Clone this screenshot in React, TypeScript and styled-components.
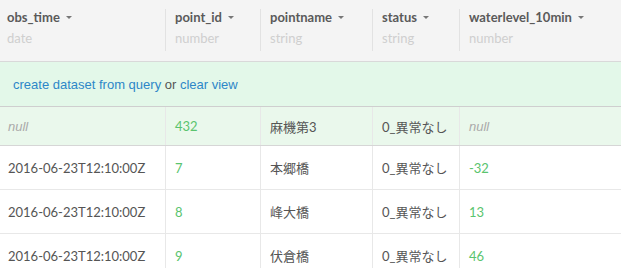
import React from "react";
import styled, { createGlobalStyle } from "styled-components";

const Global = createGlobalStyle`
  html, body { margin: 0; padding: 0; background: #fff; }
  body { font-family: Lato, "Noto Sans CJK JP", sans-serif; overflow: hidden; }
`;

const cols = [165, 95, 112, 87, 162];

const Wrap = styled.div`
  width: 621px;
  height: 268px;
  overflow: hidden;
`;

const Grid = styled.div`
  display: grid;
  grid-template-columns: ${cols.map((c) => c + "px").join(" ")};
`;

const Header = styled(Grid)`
  background: #f4f4f4;
  height: 62px;
  box-sizing: border-box;
  border-bottom: 1px solid #d9d9d9;
  padding-top: 9px;
`;

const HeadCell = styled.div<{ $first?: boolean }>`
  height: 42px;
  box-sizing: border-box;
  padding-left: ${(p) => (p.$first ? "7px" : "9px")};
  border-left: ${(p) => (p.$first ? "none" : "1px solid #e2e2e2")};
  display: flex;
  flex-direction: column;
`;

const Title = styled.div`
  font-weight: 700;
  font-size: 13px;
  color: #5a5a5a;
  line-height: 16px;
  white-space: nowrap;
`;

const Caret = styled.span`
  display: inline-block;
  margin-left: 6px;
  width: 0;
  height: 0;
  border-left: 3px solid transparent;
  border-right: 3px solid transparent;
  border-top: 3px solid #777;
  vertical-align: middle;
  position: relative;
  top: -1px;
`;

const TypeLabel = styled.div`
  font-size: 13px;
  color: #cfcfcf;
  line-height: 16px;
  margin-top: 5px;
`;

const Banner = styled.div`
  background: #e3f8e9;
  height: 45px;
  box-sizing: border-box;
  border-bottom: 1px solid #cfcfcf;
  display: flex;
  align-items: center;
  padding-left: 13px;
  font-family: "Liberation Sans", Arial, sans-serif;
  font-size: 13px;
  color: #555;
`;

const Link = styled.span`
  color: #2d87c8;
`;

const Row = styled(Grid)<{ $hl?: boolean; $h: number }>`
  height: ${(p) => p.$h}px;
  box-sizing: border-box;
  background: ${(p) => (p.$hl ? "#eaf8ec" : "#fff")};
  border-bottom: 1px solid ${(p) => (p.$hl ? "#d6d6d6" : "#e8e8e8")};
`;

const Cell = styled.div<{ $first?: boolean; $kind?: "num" | "null" | "text" }>`
  box-sizing: border-box;
  padding-left: ${(p) => (p.$first ? "8px" : "9px")};
  border-left: ${(p) => (p.$first ? "none" : "1px solid #e8e8e8")};
  display: flex;
  align-items: center;
  font-size: 13px;
  white-space: nowrap;
  overflow: hidden;
  color: ${(p) =>
    p.$kind === "num" ? "#5ac46e" : p.$kind === "null" ? "#aaa" : "#555"};
  font-style: ${(p) => (p.$kind === "null" ? "italic" : "normal")};
  font-family: ${(p) =>
    p.$kind === "null"
      ? `"Liberation Sans", Arial, sans-serif`
      : `Lato, "Noto Sans CJK JP", sans-serif`};
`;

const headers = [
  ["obs_time", "date"],
  ["point_id", "number"],
  ["pointname", "string"],
  ["status", "string"],
  ["waterlevel_10min", "number"],
];

type C = { v: string; k: "num" | "null" | "text" };
const rows: { hl?: boolean; h: number; cells: C[] }[] = [
  {
    hl: true,
    h: 39,
    cells: [
      { v: "null", k: "null" },
      { v: "432", k: "num" },
      { v: "麻機第3", k: "text" },
      { v: "0_異常なし", k: "text" },
      { v: "null", k: "null" },
    ],
  },
  {
    h: 44,
    cells: [
      { v: "2016-06-23T12:10:00Z", k: "text" },
      { v: "7", k: "num" },
      { v: "本郷橋", k: "text" },
      { v: "0_異常なし", k: "text" },
      { v: "-32", k: "num" },
    ],
  },
  {
    h: 44,
    cells: [
      { v: "2016-06-23T12:10:00Z", k: "text" },
      { v: "8", k: "num" },
      { v: "峰大橋", k: "text" },
      { v: "0_異常なし", k: "text" },
      { v: "13", k: "num" },
    ],
  },
  {
    h: 44,
    cells: [
      { v: "2016-06-23T12:10:00Z", k: "text" },
      { v: "9", k: "num" },
      { v: "伏倉橋", k: "text" },
      { v: "0_異常なし", k: "text" },
      { v: "46", k: "num" },
    ],
  },
];

export default function App() {
  return (
    <Wrap>
      <Global />
      <Header>
        {headers.map(([t, ty], i) => (
          <HeadCell key={t} $first={i === 0}>
            <Title>
              {t}
              <Caret />
            </Title>
            <TypeLabel>{ty}</TypeLabel>
          </HeadCell>
        ))}
      </Header>
      <Banner>
        <Link>create dataset from query</Link>&nbsp;or&nbsp;<Link>clear view</Link>
      </Banner>
      {rows.map((r, ri) => (
        <Row key={ri} $hl={r.hl} $h={r.h}>
          {r.cells.map((c, ci) => (
            <Cell key={ci} $first={ci === 0} $kind={c.k}>
              {c.v}
            </Cell>
          ))}
        </Row>
      ))}
    </Wrap>
  );
}
